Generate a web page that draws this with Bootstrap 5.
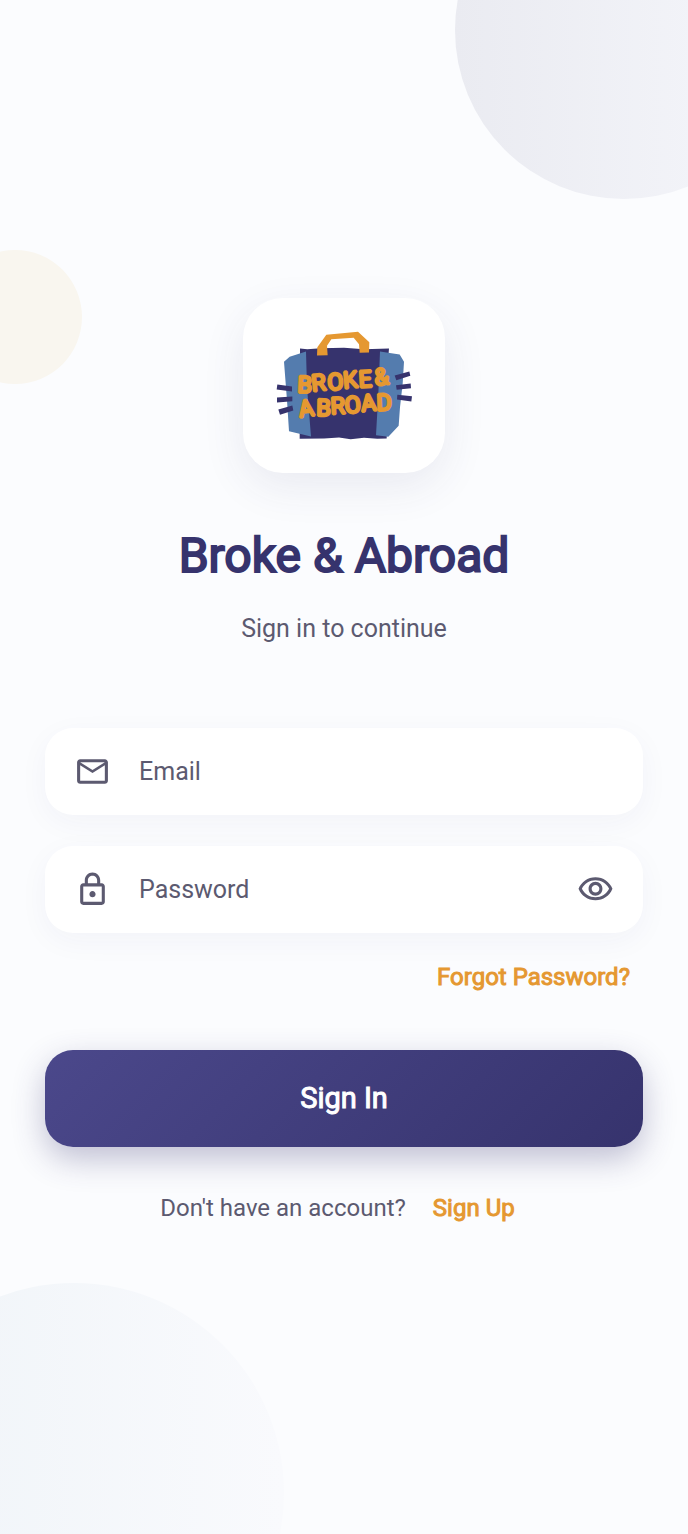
<!DOCTYPE html>
<html lang="en">
<head>
<meta charset="utf-8">
<meta name="viewport" content="width=device-width, initial-scale=1">
<title>Broke &amp; Abroad – Sign in</title>
<link href="https://cdn.jsdelivr.net/npm/bootstrap@5.3.0/dist/css/bootstrap.min.css" rel="stylesheet">
<style>
  :root { --navy: #36336d; --slate: #5c5a70; --amber: #e59831; }
  body { font-family: Roboto, "Liberation Sans", sans-serif; background: #fbfcfe; color: var(--slate); }
  .screen { z-index: 0; padding: 0 45px 12px; }
  .bubble { z-index: -1; border-radius: 50%; }
  .bubble-top { width: 338px; height: 338px; top: -139px; right: -105px; background: linear-gradient(90deg, #eaebf1, #f3f4f9 80%); }
  .bubble-side { width: 134px; height: 134px; top: 250px; left: -52px; background: #f9f6ef; }
  .bubble-bottom { width: 420px; height: 420px; bottom: -169px; left: -136px; background: linear-gradient(90deg, #f1f5f9 20%, #f9fafd); }
  .logo-tile { padding: 22px 21px; border-radius: 40px; box-shadow: 0 14px 44px rgba(54, 51, 109, .09); margin-bottom: 51px; }
  .logo-tile svg { width: 160px; height: 131px; }
  .app-name { font-size: 48px; line-height: 64px; font-weight: 400; color: var(--navy); -webkit-text-stroke: 2px var(--navy); margin-bottom: 24px; }
  .tagline { font-size: 25px; line-height: 34px; margin-bottom: 82px; }
  .field { height: 87px; padding: 0 29px; border-radius: 28px; box-shadow: 0 8px 30px rgba(54, 51, 109, .045); }
  .field + .field { margin-top: 31px; }
  .field .form-control { font-size: 25px; color: var(--slate); padding: 0 28px; }
  .field .form-control::placeholder { color: var(--slate); opacity: 1; }
  .field .form-control:focus { box-shadow: none; }
  .field-icon { width: 37px; height: 37px; fill: var(--slate); }
  .accent { color: var(--amber); -webkit-text-stroke: 1px var(--amber); font-size: 24px; line-height: 32px; }
  .accent:hover { color: #c57e1f; }
  .forgot { margin: 28px 13px 57px 0; }
  .btn-signin { height: 97px; border-radius: 28px; color: #fff; font-size: 29px; -webkit-text-stroke: 1px #fff; background: linear-gradient(135deg, #4b488b, #36336d); box-shadow: 0 12px 32px rgba(54, 51, 109, .3); margin-bottom: 45px; }
  .btn-signin:hover { color: #fff; background: #36336d; }
  .signup { font-size: 24px; line-height: 32px; gap: 27px; padding-right: 13px; }
</style>
</head>
<body>
<main class="screen position-relative overflow-hidden min-vh-100 d-flex flex-column justify-content-center">
  <div class="bubble bubble-top position-absolute"></div>
  <div class="bubble bubble-side position-absolute"></div>
  <div class="bubble bubble-bottom position-absolute"></div>

  <header class="d-flex flex-column align-items-center text-center">
    <div class="logo-tile bg-white">
      <svg class="d-block" viewBox="0 0 480 390" role="img" aria-label="Broke &amp; Abroad suitcase">
        <path fill="#36336d" d="M108 84 130 86 170 83 240 82 300 86 350 85 375 84 374 96 368 354 340 355 300 352 260 356 225 351 180 354 107 355z"/>
        <path fill="#547cae" d="M60 124 77 109 126 93 129 200 141 348 75 332 69 240z"/>
        <path fill="#547cae" d="M348 93 407 102 420 124 416 190 408 260 404 316 373 349 336 344 343 220z"/>
        <path fill="#e59831" d="M159 105 160 80 187 43 282 34 316 65 315 96 287 97 285 71 269 52 202 56 189 76 191 104z"/>
        <path fill="#36336d" d="M40 192 84 198 84 213 38 207zM39 231 85 228 85 242 39 246zM43 267 85 255 88 270 48 283zM392 165 436 153 439 166 397 179zM396 194 440 189 441 203 398 208zM400 223 444 227 442 243 399 237z"/>
        <g fill="#e59831" stroke="#e59831" stroke-width="8" stroke-linejoin="bevel" font-family="Roboto, 'Liberation Sans', sans-serif" font-weight="400" font-size="70">
          <text x="100 145 191 239 285 334" y="216 213 209 204 201 196" rotate="2 -6 -3 -5 -3 -7">BROKE&amp;</text>
          <text x="107 157 201 244 293 338" y="291 286 281 279 274 271" rotate="-8 1 -3 -4 -6 -2">ABROAD</text>
        </g>
      </svg>
    </div>
    <h1 class="app-name">Broke &amp; Abroad</h1>
    <p class="tagline">Sign in to continue</p>
  </header>

  <form>
    <div class="field bg-white d-flex align-items-center">
      <label for="email" class="d-flex">
        <svg class="field-icon" viewBox="0 0 24 24" role="img" aria-label="Email"><path d="M22 6c0-1.100-.9-2-2-2H4c-1.100 0-2 .9-2 2v12c0 1.100.9 2 2 2h16c1.100 0 2-.9 2-2V6zm-2 0-8 5-8-5h16zm0 12H4V8l8 5 8-5v10z"/></svg>
      </label>
      <input id="email" type="email" class="form-control border-0 bg-transparent" placeholder="Email" autocomplete="email">
    </div>
    <div class="field bg-white d-flex align-items-center">
      <label for="password" class="d-flex">
        <svg class="field-icon" viewBox="0 0 24 24" role="img" aria-label="Password"><path d="M18 8h-1V6c0-2.760-2.240-5-5-5S7 3.240 7 6v2H6c-1.100 0-2 .9-2 2v10c0 1.100.9 2 2 2h12c1.100 0 2-.9 2-2V10c0-1.100-.9-2-2-2zM9 6c0-1.660 1.340-3 3-3s3 1.340 3 3v2H9V6zm9 14H6V10h12v10zm-6-3c1.100 0 2-.9 2-2s-.9-2-2-2-2 .9-2 2 .9 2 2 2z"/></svg>
      </label>
      <input id="password" type="password" class="form-control border-0 bg-transparent" placeholder="Password" autocomplete="current-password">
      <button type="button" class="btn border-0 p-0 d-flex" aria-label="Show password">
        <svg class="field-icon" viewBox="0 0 24 24" aria-hidden="true"><path d="M12 6c3.790 0 7.170 2.130 8.820 5.500C19.170 14.870 15.790 17 12 17s-7.170-2.130-8.820-5.500C4.830 8.130 8.210 6 12 6m0-2C7 4 2.730 7.110 1 11.500 2.730 15.890 7 19 12 19s9.270-3.110 11-7.500C21.270 7.110 17 4 12 4zm0 5c1.380 0 2.500 1.120 2.500 2.500S13.380 14 12 14s-2.500-1.120-2.500-2.500S10.620 9 12 9m0-2c-2.480 0-4.500 2.020-4.500 4.500S9.520 16 12 16s4.500-2.020 4.500-4.500S14.480 7 12 7z"/></svg>
      </button>
    </div>
    <div class="forgot d-flex justify-content-end">
      <a href="#" class="accent text-decoration-none">Forgot Password?</a>
    </div>
    <button type="submit" class="btn btn-signin border-0 w-100">Sign In</button>
  </form>

  <div class="signup d-flex justify-content-center">
    <span>Don't have an account?</span>
    <a href="#" class="accent text-decoration-none">Sign Up</a>
  </div>
</main>
<script src="https://cdn.jsdelivr.net/npm/bootstrap@5.3.0/dist/js/bootstrap.bundle.min.js"></script>
</body>
</html>
